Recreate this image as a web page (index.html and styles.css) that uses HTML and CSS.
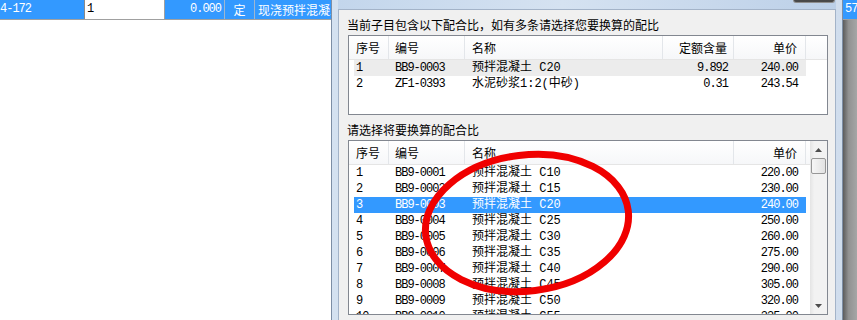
FILE: index.html
```html
<!DOCTYPE html>
<html lang="zh-CN">

<head>
    <meta charset="UTF-8">
    <meta name="viewport" content="width=device-width, initial-scale=1.0">
    <title>配合比换算</title>
    <link rel="stylesheet" href="styles.css">
</head>

<body>
    <div class="sheet">
        <div class="sheet-row">
            <div class="cell cell-code mono">4-172</div>
            <div class="cell cell-input mono">1</div>
            <div class="cell cell-qty mono">0.000</div>
            <div class="cell cell-type">定</div>
            <div class="cell cell-name">现浇预拌混凝土 矩形柱</div>
            <div class="cell cell-end mono">57</div>
        </div>
        <div class="sheet-body">
            <div class="sheet-blank"></div>
            <div class="sheet-side"></div>
        </div>
    </div>

    <div class="dialog">
        <div class="dialog-title">
            <span class="dialog-caption">配合比换算</span>
            <span class="dialog-close"></span>
        </div>
        <div class="dialog-client">
            <div class="dialog-label">当前子目包含以下配合比，如有多条请选择您要换算的配比</div>
            <div class="listview listview-current">
                <div class="list-head">
                    <span class="h-seq">序号</span>
                    <span class="h-code">编号</span>
                    <span class="h-name">名称</span>
                    <span class="h-num">定额含量</span>
                    <span class="h-price">单价</span>
                    <span class="h-fill"></span>
                </div>
                <div class="list-body">
                    <div class="list-row row-dim">
                        <span class="c-seq mono">1</span>
                        <span class="c-code mono">BB9-0003</span>
                        <span class="c-name">预拌混凝土 C20</span>
                        <span class="c-num mono">9.892</span>
                        <span class="c-price mono">240.00</span>
                    </div>
                    <div class="list-row">
                        <span class="c-seq mono">2</span>
                        <span class="c-code mono">ZF1-0393</span>
                        <span class="c-name">水泥砂浆1:2(中砂)</span>
                        <span class="c-num mono">0.31</span>
                        <span class="c-price mono">243.54</span>
                    </div>
                </div>
            </div>

            <div class="dialog-label label-second">请选择将要换算的配合比</div>
            <div class="listview listview-choose">
                <div class="listview-main">
                    <div class="list-head">
                        <span class="h-seq">序号</span>
                        <span class="h-code">编号</span>
                        <span class="h-name">名称</span>
                        <span class="h-price">单价</span>
                        <span class="h-fill"></span>
                    </div>
                    <div class="list-body">
                        <div class="list-row">
                            <span class="c-seq mono">1</span>
                            <span class="c-code mono">BB9-0001</span>
                            <span class="c-name">预拌混凝土 C10</span>
                            <span class="c-price mono">220.00</span>
                        </div>
                        <div class="list-row">
                            <span class="c-seq mono">2</span>
                            <span class="c-code mono">BB9-0002</span>
                            <span class="c-name">预拌混凝土 C15</span>
                            <span class="c-price mono">230.00</span>
                        </div>
                        <div class="list-row row-selected">
                            <span class="c-seq mono">3</span>
                            <span class="c-code mono">BB9-0003</span>
                            <span class="c-name">预拌混凝土 C20</span>
                            <span class="c-price mono">240.00</span>
                        </div>
                        <div class="list-row">
                            <span class="c-seq mono">4</span>
                            <span class="c-code mono">BB9-0004</span>
                            <span class="c-name">预拌混凝土 C25</span>
                            <span class="c-price mono">250.00</span>
                        </div>
                        <div class="list-row">
                            <span class="c-seq mono">5</span>
                            <span class="c-code mono">BB9-0005</span>
                            <span class="c-name">预拌混凝土 C30</span>
                            <span class="c-price mono">260.00</span>
                        </div>
                        <div class="list-row">
                            <span class="c-seq mono">6</span>
                            <span class="c-code mono">BB9-0006</span>
                            <span class="c-name">预拌混凝土 C35</span>
                            <span class="c-price mono">275.00</span>
                        </div>
                        <div class="list-row">
                            <span class="c-seq mono">7</span>
                            <span class="c-code mono">BB9-0007</span>
                            <span class="c-name">预拌混凝土 C40</span>
                            <span class="c-price mono">290.00</span>
                        </div>
                        <div class="list-row">
                            <span class="c-seq mono">8</span>
                            <span class="c-code mono">BB9-0008</span>
                            <span class="c-name">预拌混凝土 C45</span>
                            <span class="c-price mono">305.00</span>
                        </div>
                        <div class="list-row">
                            <span class="c-seq mono">9</span>
                            <span class="c-code mono">BB9-0009</span>
                            <span class="c-name">预拌混凝土 C50</span>
                            <span class="c-price mono">320.00</span>
                        </div>
                        <div class="list-row">
                            <span class="c-seq mono">10</span>
                            <span class="c-code mono">BB9-0010</span>
                            <span class="c-name">预拌混凝土 C55</span>
                            <span class="c-price mono">335.00</span>
                        </div>
                    </div>
                </div>
                <div class="scrollbar">
                    <div class="sb-btn">
                        <svg width="7" height="4" viewBox="0 0 7 4"><path d="M0 4 L3.5 0 L7 4 Z" fill="#4d4d4d"/></svg>
                    </div>
                    <div class="sb-thumb"></div>
                    <div class="sb-track"></div>
                    <div class="sb-btn">
                        <svg width="7" height="4" viewBox="0 0 7 4"><path d="M0 0 L7 0 L3.5 4 Z" fill="#4d4d4d"/></svg>
                    </div>
                </div>
            </div>
        </div>
    </div>

    <!-- hand-drawn marker over the selected rows -->
    <svg class="mark" width="857" height="320" viewBox="0 0 857 320">
        <ellipse cx="527" cy="223" rx="102" ry="68" transform="rotate(-7 527 223)" fill="none" stroke="#f00000" stroke-width="7"/>
    </svg>
</body>

</html>
```

FILE: styles.css
```css
body {
    margin: 0;
    width: 857px;
    height: 320px;
    overflow: hidden;
    position: relative;
    background: #fff;
    color: #000;
    font-family: "Noto Sans CJK SC", sans-serif;
    font-size: 12px;
}

.mono {
    font-family: "Liberation Mono", "Noto Sans CJK SC", monospace;
    letter-spacing: -1px;
}

/* underlying sheet */
.sheet-row {
    display: flex;
    height: 19px;
    line-height: 19px;
    border-bottom: 1px solid #a0a0a0;
    background: #3399ff;
    color: #fff;
    white-space: nowrap;
}

.cell {
    box-sizing: border-box;
    overflow: hidden;
    border-right: 1px solid #9fb6cf;
}

.cell-code {
    width: 85px;
    border-right-color: #8a8a8a;
}

.cell-input {
    width: 80px;
    padding-left: 2px;
    background: #fff;
    color: #000;
    border-right-color: #a0a0a0;
}

.cell-qty {
    width: 60px;
    padding-right: 3px;
    text-align: right;
}

.cell-type {
    width: 30px;
    text-align: center;
}

.cell-name {
    flex: 1;
    padding-left: 3px;
}

.cell-end {
    width: 14px;
    padding-left: 2px;
    border-right: 0;
}

.sheet-body {
    display: flex;
    height: 300px;
}

.sheet-blank {
    flex: 1;
}

.sheet-side {
    width: 14px;
    background: linear-gradient(to right, #5c5c5c, #929292 40%, #a6a6a6);
}

/* dialog window */
.dialog {
    position: absolute;
    left: 331px;
    top: -21px;
    width: 512px;
    height: 360px;
    box-sizing: border-box;
    padding: 0 6px 6px;
    border: 1px solid #7d8ea5;
    background: linear-gradient(to right, #d4e1f0, #e2ebf5 50%, #d0dded);
}

.dialog-title {
    display: flex;
    align-items: flex-start;
    height: 29px;
    background: linear-gradient(to right, #c3d6ec, #d5e2f1 45%, #bcd0e8);
}

.dialog-caption {
    padding: 6px 0 0 2px;
    line-height: 16px;
    color: #1e1e1e;
}

.dialog-close {
    margin-left: auto;
    margin-right: 1px;
    width: 42px;
    height: 23px;
    box-sizing: border-box;
    border: 1px solid #8d8d8d;
    border-top: 0;
    border-radius: 0 0 3px 3px;
    background: linear-gradient(#2f2f2f, #4a4a4a);
}

.dialog-client {
    height: 320px;
    border: 1px solid #a3b3c8;
    background: #f0f0f0;
    padding-top: 7px;
}

.dialog-label {
    padding-left: 8px;
    line-height: 16px;
    margin-bottom: 2px;
}

.label-second {
    margin-top: 7px;
}

/* list views */
.listview {
    margin-left: 9px;
    width: 480px;
    box-sizing: border-box;
    border: 1px solid #828790;
    background: #fff;
    overflow: hidden;
}

.listview-current {
    height: 80px;
}

.listview-choose {
    height: 175px;
    display: flex;
}

.listview-main {
    flex: 1;
    overflow: hidden;
}

.list-head {
    display: grid;
    height: 23px;
    border-bottom: 1px solid #e5e5e5;
    background: linear-gradient(#fff, #f6f7f9);
    line-height: 23px;
}

.listview-current .list-head {
    grid-template-columns: 40px 76px 198px 71px 72px 1fr;
}

.listview-choose .list-head {
    grid-template-columns: 40px 76px 269px 72px 1fr;
}

.list-head span {
    box-sizing: border-box;
    border-right: 1px solid #e3e6ea;
}

.list-head .h-fill {
    border-right: 0;
}

.h-seq {
    padding-left: 7px;
}

.h-code {
    padding-left: 6px;
}

.h-name {
    padding-left: 7px;
}

.h-num {
    text-align: right;
    padding-right: 6px;
}

.h-price {
    text-align: right;
    padding-right: 8px;
}

.list-row {
    display: grid;
    width: max-content;
    margin-left: 5px;
    line-height: 16px;
    height: 16px;
    white-space: nowrap;
}

.listview-current .list-row {
    grid-template-columns: 35px 76px 198px 71px 72px;
}

.listview-choose .list-row {
    grid-template-columns: 35px 76px 269px 72px;
}

.list-row span {
    box-sizing: border-box;
    overflow: hidden;
}

.row-dim {
    background: #ececec;
}

.row-selected {
    background: #3399ff;
    color: #fff;
}

.c-seq {
    padding-left: 2px;
}

.c-code {
    padding-left: 6px;
}

.c-name {
    padding-left: 7px;
    font-family: "Liberation Mono", "Noto Sans CJK SC", monospace;
}

.c-num {
    text-align: right;
    padding-right: 6px;
}

.c-price {
    text-align: right;
    padding-right: 8px;
}

/* scrollbar */
.scrollbar {
    width: 17px;
    display: flex;
    flex-direction: column;
    align-items: center;
    background: linear-gradient(to right, #e4e4e4, #f2f2f2 25%, #f2f2f2);
}

.sb-btn {
    height: 17px;
    width: 17px;
    display: flex;
    align-items: center;
    justify-content: center;
}

.sb-thumb {
    width: 15px;
    height: 16px;
    box-sizing: border-box;
    border: 1px solid #979797;
    border-radius: 2px;
    background: linear-gradient(to right, #f6f6f6, #e2e2e2);
}

.sb-track {
    flex: 1;
}

.mark {
    position: absolute;
    left: 0;
    top: 0;
    pointer-events: none;
}
```
